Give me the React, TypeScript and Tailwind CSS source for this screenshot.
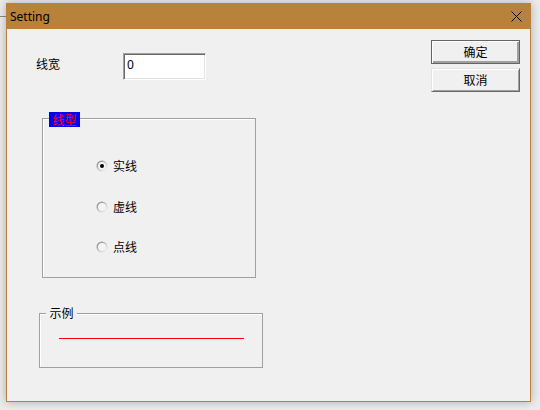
import { useState } from "react";

const cjk = "font-['SimSun','Noto_Sans_CJK_SC',sans-serif]";

interface RadioProps {
  id: string;
  label: string;
  checked: boolean;
  onSelect: () => void;
}

const Radio = ({ id, label, checked, onSelect }: RadioProps) => {
  return (
    <div className="flex items-center h-[16px] gap-[5px] cursor-default" onClick={onSelect}>
      <svg width="12" height="12" viewBox="0 0 12 12">
        <defs>
          <linearGradient id={`rg-${id}`} x1="0" y1="0" x2="1" y2="1">
            <stop offset="0" stopColor="#7a7a7a" />
            <stop offset="0.55" stopColor="#c8c8c8" />
            <stop offset="1" stopColor="#ffffff" />
          </linearGradient>
        </defs>
        <circle cx="6" cy="6" r="5.5" fill={`url(#rg-${id})`} />
        <circle cx="6" cy="6" r="4" fill="#f4f4f4" />
        {checked && <circle cx="6" cy="6" r="2" fill="#000" />}
      </svg>
      <span className={`${cjk} text-[12px] leading-[12px] text-black`}>{label}</span>
    </div>
  );
};

function App() {
  const [lineStyle, setLineStyle] = useState("solid");
  const [width, setWidth] = useState("0");

  const styles = [
    { key: "solid", label: "实线" },
    { key: "dash", label: "虚线" },
    { key: "dot", label: "点线" },
  ];

  return (
    <div className="relative w-[540px] h-[410px] bg-[#ececec] overflow-hidden">
      <div className="absolute left-0 top-[16px] w-[6px] h-px bg-[#8a8a8a]" />
      <div className="relative ml-[6px] pt-[3px]">
        <div className="w-[525px] h-[399px] border border-[#b8823a] bg-[#b8823a] flex flex-col shadow-[0_0_9px_rgba(0,0,0,0.28)]">
          {/* title bar */}
          <div className="h-[25px] flex items-center justify-between pl-[3px] pr-[8px]">
            <span className="font-['Noto_Sans',sans-serif] text-[12px] leading-[12px] text-black">
              Setting
            </span>
            <svg width="11" height="11" viewBox="0 0 11 11">
              <path d="M0.5 0.5 L10.5 10.5 M10.5 0.5 L0.5 10.5" stroke="#000" strokeWidth="1" />
            </svg>
          </div>

          {/* client area */}
          <div className="flex-1 bg-[#f0f0f0] flex">
            <div className="flex-1 flex flex-col">
              <div className="mt-[24px] ml-[29px] flex items-start">
                <span className={`${cjk} w-[87px] pt-[5px] text-[12px] leading-[12px] text-black`}>
                  线宽
                </span>
                <input
                  value={width}
                  onChange={(e) => setWidth(e.target.value)}
                  className="w-[83px] h-[27px] bg-white border border-t-[#a0a0a0] border-l-[#a0a0a0] border-r-white border-b-white shadow-[inset_1px_1px_0_#696969,inset_-1px_-1px_0_#e3e3e3] px-[3px] pb-[4px] font-['Noto_Sans',sans-serif] text-[12px] text-black outline-none"
                />
              </div>

              <div className="relative ml-[35px] mt-[38px] w-[214px] h-[160px] border border-[#a0a0a0] shadow-[inset_1px_1px_0_#ffffff]">
                <span className={`${cjk} absolute left-[6px] top-[-7px] w-[31px] h-[15px] bg-[#0000ff] text-[#ff0000] text-[12px] leading-[15px] text-center`}>
                  线型
                </span>
                <div className="flex flex-col gap-[24.5px] pl-[53px] pt-[39px]">
                  {styles.map((s) => (
                    <Radio
                      key={s.key}
                      id={s.key}
                      label={s.label}
                      checked={lineStyle === s.key}
                      onSelect={() => setLineStyle(s.key)}
                    />
                  ))}
                </div>
              </div>

              <div className="relative ml-[32px] mt-[35px] w-[224px] h-[55px] border border-[#a0a0a0] shadow-[inset_1px_1px_0_#ffffff]">
                <span className={`${cjk} absolute left-[6px] top-[-8px] w-[31px] h-[14px] bg-[#f0f0f0] text-black text-[12px] leading-[14px] text-center`}>
                  示例
                </span>
                <div className="ml-[19px] mt-[24px] w-[185px] h-px bg-[#ff0000]" />
              </div>
            </div>

            <div className="flex flex-col gap-[4px] pt-[11px] pr-[10px]">
              <button className={`${cjk} w-[89px] h-[24px] bg-[#f0f0f0] border border-[#646464] shadow-[inset_1px_1px_0_#ffffff,inset_-1px_-1px_0_#a0a0a0,inset_-2px_-2px_0_#a0a0a0] text-[12px] leading-[12px] text-black`}>
                确定
              </button>
              <button className={`${cjk} w-[89px] h-[24px] bg-[#f0f0f0] border border-t-[#e3e3e3] border-l-[#e3e3e3] border-r-[#696969] border-b-[#696969] shadow-[inset_1px_1px_0_#ffffff,inset_-1px_-1px_0_#a0a0a0] text-[12px] leading-[12px] text-black`}>
                取消
              </button>
            </div>
          </div>
        </div>
      </div>
    </div>
  );
}

export default App;
